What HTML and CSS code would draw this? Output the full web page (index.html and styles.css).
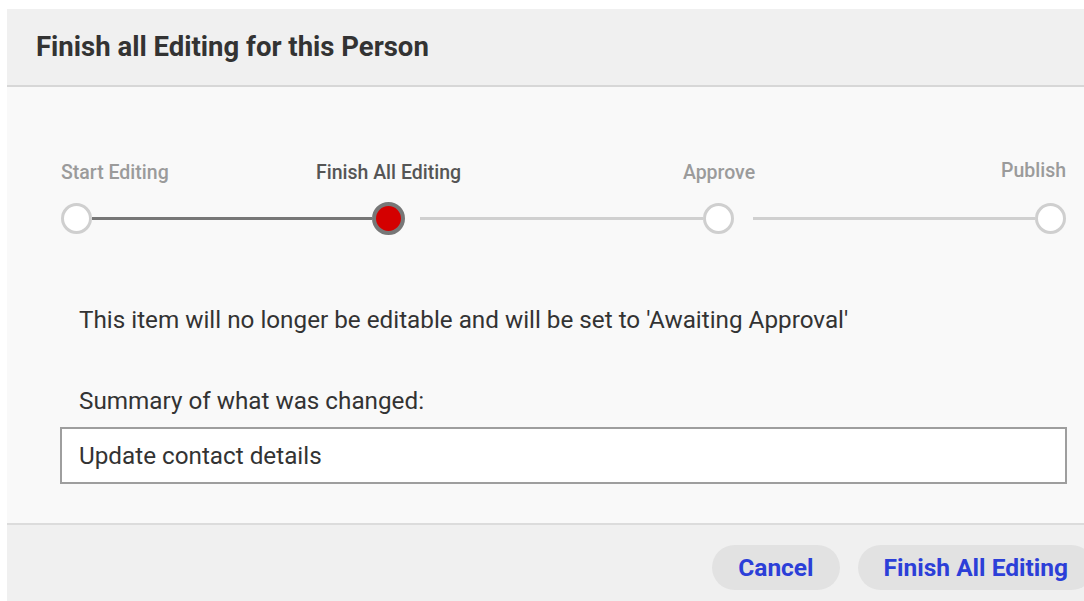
FILE: index.html
```html
<!DOCTYPE html>
<html lang="en">
<head>
<meta charset="utf-8">
<title>Finish all Editing for this Person</title>
<link rel="stylesheet" href="styles.css">
</head>
<body>
<div class="dialog">
  <header class="dialog-header">
    <h1 class="dialog-title">Finish all Editing for this Person</h1>
  </header>

  <section class="dialog-body">
    <div class="stepper">
      <span class="step-label first">Start Editing</span>
      <span class="step-label current second">Finish All Editing</span>
      <span class="step-label third">Approve</span>
      <span class="step-label last">Publish</span>

      <span class="step-dot done"></span>
      <span class="step-line done"></span>
      <span class="step-dot active"></span>
      <span class="step-line gap-a"></span>
      <span class="step-dot"></span>
      <span class="step-line gap-b"></span>
      <span class="step-dot"></span>
    </div>

    <p class="notice">This item will no longer be editable and will be set to 'Awaiting Approval'</p>

    <label class="field-label" for="summary">Summary of what was changed:</label>
    <input class="field-input" id="summary" type="text" value="Update contact details">
  </section>

  <footer class="dialog-footer">
    <button class="btn" type="button">Cancel</button>
    <button class="btn" type="button">Finish All Editing</button>
  </footer>
</div>
</body>
</html>
```

FILE: styles.css
```css
html, body {
  margin: 0;
  padding: 0;
  background: #ffffff;
  overflow: hidden;
}

body {
  font-family: Roboto, "Liberation Sans", Arial, sans-serif;
  color: #333333;
}

.dialog {
  width: 1101px;
  margin: 9px 0 0 7px;
  display: flex;
  flex-direction: column;
}

/* header */
.dialog-header {
  background: #f0f0f0;
  height: 78px;
  padding: 0 0 2px 29px;
  box-sizing: border-box;
  border-bottom: 2px solid #d7d7d7;
  display: flex;
  align-items: center;
}

.dialog-title {
  margin: 0;
  font-size: 27.5px;
  font-weight: 700;
  color: #333333;
}

/* body */
.dialog-body {
  background: #f9f9f9;
  height: 436px;
  padding: 72px 41px 0 53px;
  box-sizing: border-box;
}

/* progress steps: dots sit on the second row, labels above them */
.stepper {
  margin-left: 1px;
  margin-right: 1px;
  display: grid;
  grid-template-columns: 31px 280px 33px 298px 32px 300px 31px;
  grid-template-rows: auto 33px;
  row-gap: 18px;
  align-items: center;
}

.step-label {
  grid-row: 1;
  font-size: 19.5px;
  font-weight: 500;
  color: #9b9b9b;
  white-space: nowrap;
  align-self: end;
}

.step-label.first { grid-column: 1; justify-self: start; }
.step-label.second { grid-column: 3; justify-self: center; }
.step-label.third { grid-column: 5; justify-self: center; }
.step-label.last { grid-column: 7; justify-self: end; margin-bottom: 2px; }
.step-label.current { color: #555555; }

.step-dot {
  grid-row: 2;
  box-sizing: border-box;
  width: 31px;
  height: 31px;
  border-radius: 50%;
  border: 3px solid #cfcfcf;
  background: #ffffff;
}

.step-dot.active {
  width: 33px;
  height: 33px;
  border: 4px solid #777777;
  background: #d40000;
}

.step-line {
  grid-row: 2;
  height: 3px;
  background: #d0d0d0;
}

.step-line.done { background: #777777; }
.step-line.gap-a { margin-left: 15px; }
.step-line.gap-b { margin-left: 18px; }

.notice {
  margin: 71px 0 0 19px;
  font-size: 24.25px;
  line-height: 28px;
  color: #333333;
}

.field-label {
  display: block;
  margin: 53px 0 0 19px;
  font-size: 24.25px;
  line-height: 28px;
  color: #333333;
}

.field-input {
  display: block;
  box-sizing: border-box;
  width: 100%;
  height: 57px;
  margin-top: 12px;
  padding: 1px 17px 0;
  border: 2px solid #9e9e9e;
  background: #ffffff;
  font-family: inherit;
  font-size: 24.25px;
  color: #333333;
  outline: none;
}

/* footer */
.dialog-footer {
  background: #f0f0f0;
  border-top: 2px solid #dcdcdc;
  height: 80px;
  padding: 20px 14px 0 0;
  box-sizing: border-box;
  display: flex;
  justify-content: flex-end;
  align-items: flex-start;
  gap: 18px;
}

.btn {
  height: 45px;
  padding: 0 26px;
  border: none;
  border-radius: 23px;
  background: #e2e2e2;
  font-family: inherit;
  font-size: 24.5px;
  font-weight: 700;
  color: #2c3fd8;
  cursor: pointer;
}
```
